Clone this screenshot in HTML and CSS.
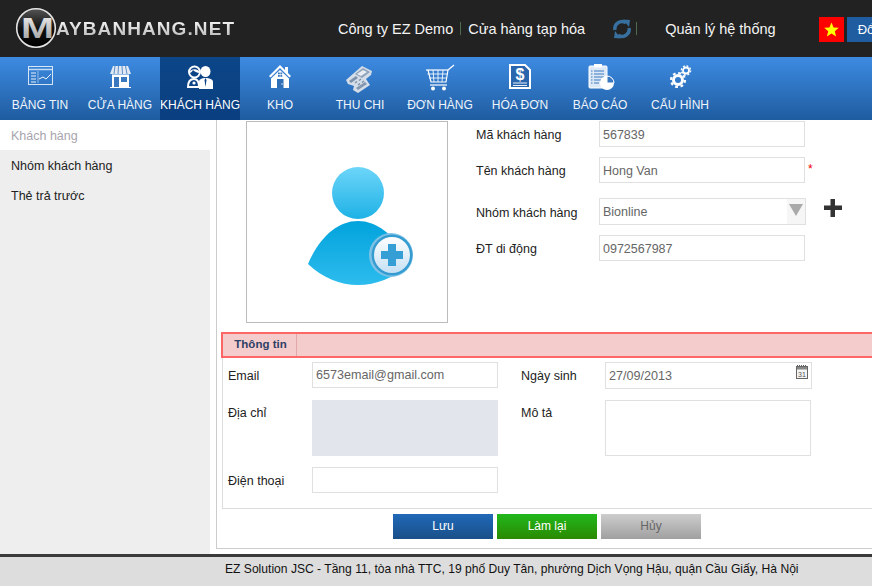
FILE: index.html
```html
<!DOCTYPE html>
<html lang="vi">
    <head>
        <meta charset="UTF-8">
        <meta name="viewport" content="width=device-width, initial-scale=1.0">
        <title>Máy bán hàng</title>
        <link rel="stylesheet" href="styles.css">
    </head>
    <body>
        <header class="top">
            <a class="logo" href="#">
                <svg class="logo-mark" width="42" height="42" viewBox="0 0 42 42">
                    <defs>
                        <linearGradient id="logoBall" x1="0" y1="0" x2="0" y2="1">
                            <stop offset="0" stop-color="#555"/>
                            <stop offset="0.5" stop-color="#111"/>
                            <stop offset="1" stop-color="#000"/>
                        </linearGradient>
                        <linearGradient id="logoM" x1="0" y1="0" x2="0" y2="1">
                            <stop offset="0" stop-color="#f4f4f4"/>
                            <stop offset="1" stop-color="#999"/>
                        </linearGradient>
                    </defs>
                    <circle cx="21" cy="21" r="19.3" fill="url(#logoBall)" stroke="#e4e4e4" stroke-width="1.6"/>
                    <text x="6" y="31" class="logo-m" fill="url(#logoM)" textLength="33" lengthAdjust="spacingAndGlyphs">M</text>
                </svg>
                <span class="logo-text">AYBANHANG.NET</span>
            </a>
            <span class="top-link company">Công ty EZ Demo</span>
            <span class="top-sep"></span>
            <span class="top-link">Cửa hàng tạp hóa</span>
            <svg class="sync" width="20" height="20" viewBox="0 0 20 20" fill="none" stroke="#37709f" stroke-width="3.4">
                <path d="M3 11 A7 7 0 0 1 14 4"/>
                <path d="M17 9 A7 7 0 0 1 6 16"/>
                <path d="M11 0.5 L18 1 L17 8 Z" fill="#37709f" stroke="none"/>
                <path d="M9 19.5 L2 19 L3 12 Z" fill="#37709f" stroke="none"/>
            </svg>
            <span class="top-sep sep-sync"></span>
            <span class="top-link system">Quản lý hệ thống</span>
            <svg class="flag" width="25" height="25" viewBox="0 0 25 25">
                <rect width="25" height="25" fill="#f00"/>
                <path d="M12.5 5.5 L14.6 10.4 L19.8 10.8 L15.8 14.2 L17.1 19.4 L12.5 16.6 L7.9 19.4 L9.2 14.2 L5.2 10.8 L10.4 10.4 Z" fill="#ff0"/>
            </svg>
            <a class="change-btn" href="#">Đổi mật khẩu</a>
        </header>

        <nav class="menu">
            <a class="menu-item" href="#">
                <svg viewBox="0 0 32 32" fill="none" stroke="#fff">
                    <rect x="4.5" y="3.5" width="24" height="18" stroke-opacity="0.8"/>
                    <path d="M5 6.5 H28" stroke-width="1.5" stroke-opacity="0.7"/>
                    <path d="M7 10 H12 M7 13 H12 M7 16 H12 M7 19 H12" stroke-opacity="0.9"/>
                    <path d="M14 8 V20" stroke-opacity="0.5"/>
                    <path d="M15 16 L19 14 L22 16 L27 11" stroke-opacity="0.9"/>
                </svg>
                <span>BẢNG TIN</span>
            </a>
            <a class="menu-item" href="#">
                <svg viewBox="0 0 32 32" fill="#fff">
                    <path d="M9 3 H24 L27 11 H6 Z" fill="#dfe8f3"/>
                    <path d="M11 3 L10 11 M14.5 3 L14 11 M18 3 L18.5 11 M21.5 3 L23 11" stroke="#5d8ec6"/>
                    <path d="M8 11.5 H25 V24 H8 Z"/>
                    <rect x="10" y="14" width="5" height="10" fill="#3a79bf"/>
                    <rect x="17" y="14" width="6" height="5" fill="#3a79bf"/>
                    <rect x="6" y="24" width="21" height="1"/>
                </svg>
                <span>CỬA HÀNG</span>
            </a>
            <a class="menu-item active" href="#">
                <svg viewBox="0 0 32 32" fill="#fff">
                    <circle cx="10.5" cy="9" r="5.5" fill="none" stroke="#fff" stroke-width="2"/>
                    <path d="M5 10 C6 5 15 5 16 10 C13 10 10 8 9 7 C8 9 7 10 5 10 Z"/>
                    <path d="M4 24 C4 18 7 16 10 16 C13 16 15 18 15 24 Z" fill="none" stroke="#fff" stroke-width="2"/>
                    <circle cx="10" cy="20" r="1.6"/>
                    <ellipse cx="21.5" cy="8.5" rx="5" ry="5.5"/>
                    <path d="M15 26 V19 C15 16 18 15 21.5 15 C25 15 29 16 29 19 V26 Z"/>
                    <path d="M21.5 15 L20.5 17 L21.5 24 L22.5 17 Z" fill="#0a4286"/>
                </svg>
                <span>KHÁCH HÀNG</span>
            </a>
            <a class="menu-item" href="#">
                <svg viewBox="0 0 32 32" fill="#fff">
                    <path d="M16 2 L27 13 L25.5 14.5 L16 5 L6.5 14.5 L5 13 Z"/>
                    <path d="M16 7 L25 15.5 V25 H7 V15.5 Z"/>
                    <rect x="21" y="4" width="3" height="6"/>
                    <rect x="14" y="9.5" width="1.8" height="1.8" fill="#3a79bf"/>
                    <rect x="16.4" y="9.5" width="1.8" height="1.8" fill="#3a79bf"/>
                    <rect x="14" y="12" width="1.8" height="1.8" fill="#3a79bf"/>
                    <rect x="16.4" y="12" width="1.8" height="1.8" fill="#3a79bf"/>
                    <rect x="13" y="16" width="6.5" height="9" fill="#2f6fb7"/>
                    <circle cx="18" cy="21" r="0.7"/>
                </svg>
                <span>KHO</span>
            </a>
            <a class="menu-item" href="#">
                <svg viewBox="0 0 32 32">
                    <path d="M2 17 L18 3 L28 8 L27 12 L22 16 L26 22 L14 30 L9 27 L10 23 L4 21 Z" fill="#d4dde8"/>
                    <path d="M11 11 L19 5 L26 9 L18 15 Z" fill="#8fa3ba"/>
                    <path d="M13 11 L19 7 L23 9 L17 13 Z" fill="#e9eef4"/>
                    <path d="M5 18 L12 13 L14 15 L7 20 Z" fill="#7e93ab"/>
                    <path d="M12 25 L21 19 L23 21 L14 27 Z" fill="#8397ae"/>
                    <path d="M11 20 L13 18.5 M14 22 L16 20.5 M15 17.5 L17 16 M18 19.5 L20 18" stroke="#7d91a8" stroke-width="1.5"/>
                </svg>
                <span>THU CHI</span>
            </a>
            <a class="menu-item" href="#">
                <svg viewBox="0 0 32 32" fill="none" stroke="#fff">
                    <path d="M2 7 H24" stroke-width="1.2"/>
                    <path d="M24 7 L30 2 M24 7 L22 19 H7 L4 7" stroke-width="1.2"/>
                    <path d="M3.5 11 H23.5 M5 15 H22.5 M9 7 L10 19 M14 7 V19 M19 7 L18 19" stroke-opacity="0.85"/>
                    <path d="M6 22 H23" stroke-width="1.2"/>
                    <circle cx="9" cy="25.5" r="2" fill="#fff" stroke="none"/>
                    <circle cx="20" cy="25.5" r="2" fill="#fff" stroke="none"/>
                </svg>
                <span>ĐƠN HÀNG</span>
            </a>
            <a class="menu-item" href="#">
                <svg viewBox="0 0 32 32">
                    <path d="M6 2 H21 L26 7 V25 H6 Z" fill="#2a66ad" stroke="#fff" stroke-width="2"/>
                    <text x="16" y="17" class="icon-dollar" fill="#fff" text-anchor="middle">$</text>
                    <path d="M9 20 H23 M9 22.5 H23" stroke="#fff" stroke-width="0.9"/>
                </svg>
                <span>HÓA ĐƠN</span>
            </a>
            <a class="menu-item" href="#">
                <svg viewBox="0 0 32 32">
                    <rect x="5" y="3" width="18" height="22" rx="1" fill="#dce8f6" stroke="#fff"/>
                    <rect x="10" y="1" width="8" height="3.5" fill="#fff"/>
                    <path d="M10 8 H20 M10 11 H20 M10 14 H20 M10 17 H17 M10 20 H15" stroke="#3a79bf"/>
                    <path d="M7 8 H8.5 M7 11 H8.5 M7 14 H8.5 M7 17 H8.5 M7 20 H8.5" stroke="#3a79bf"/>
                    <circle cx="23" cy="20" r="7" fill="#fff"/>
                    <path d="M23 20 V13 A7 7 0 0 1 30 20 Z" fill="#3a79bf" stroke="#fff"/>
                </svg>
                <span>BÁO CÁO</span>
            </a>
            <a class="menu-item" href="#">
                <svg viewBox="0 0 32 32" fill="none" stroke="#fff">
                    <circle cx="14" cy="17" r="4.5" stroke-width="3"/>
                    <circle cx="14" cy="17" r="7" stroke-width="2.2" stroke-dasharray="2.8 2.7"/>
                    <circle cx="22" cy="7.5" r="3" stroke-width="1.8"/>
                    <circle cx="22" cy="7.5" r="4.6" stroke-width="1.4" stroke-dasharray="1.9 1.7"/>
                </svg>
                <span>CẤU HÌNH</span>
            </a>
        </nav>

        <div class="page">
            <aside class="side">
                <a class="side-item current" href="#">Khách hàng</a>
                <a class="side-item" href="#">Nhóm khách hàng</a>
                <a class="side-item" href="#">Thẻ trả trước</a>
            </aside>

            <main class="content">
                <section class="customer">
                    <div class="photo">
                        <svg width="200" height="200" viewBox="0 0 200 200">
                            <defs>
                                <linearGradient id="head" x1="0" y1="0" x2="0" y2="1">
                                    <stop offset="0" stop-color="#6dd5f9"/>
                                    <stop offset="1" stop-color="#1fb2e6"/>
                                </linearGradient>
                                <linearGradient id="torso" x1="0" y1="0" x2="0" y2="1">
                                    <stop offset="0" stop-color="#02a3dc"/>
                                    <stop offset="1" stop-color="#2dbcee"/>
                                </linearGradient>
                                <linearGradient id="badge" x1="0" y1="0" x2="0" y2="1">
                                    <stop offset="0" stop-color="#fdfeff"/>
                                    <stop offset="1" stop-color="#c6e1f4"/>
                                </linearGradient>
                            </defs>
                            <circle cx="111" cy="71" r="26" fill="url(#head)"/>
                            <path d="M61 142 C72 116 90 99 111 99 C132 99 150 116 163 142 C147 156 129 163 111 163 C93 163 76 156 61 142 Z" fill="url(#torso)"/>
                            <circle cx="144" cy="133" r="22" fill="#7fc2e6"/>
                            <circle cx="145" cy="133" r="20.5" fill="#349cd0"/>
                            <circle cx="145" cy="133" r="18" fill="url(#badge)"/>
                            <path d="M141 122 H149 V129 H156 V137 H149 V144 H141 V137 H134 V129 H141 Z" fill="#359fd5"/>
                        </svg>
                    </div>
                    <div class="fields">
                        <div class="field">
                            <label class="lbl">Mã khách hàng</label>
                            <input class="txt" type="text" value="567839">
                        </div>
                        <div class="field">
                            <label class="lbl">Tên khách hàng</label>
                            <input class="txt" type="text" value="Hong Van">
                            <span class="req">*</span>
                        </div>
                        <div class="field field-group">
                            <label class="lbl">Nhóm khách hàng</label>
                            <div class="select-wrap">
                                <select class="sel"><option>Bionline</option></select>
                                <span class="sel-arrow"></span>
                            </div>
                            <svg class="add" width="18" height="18" viewBox="0 0 18 18"><path d="M6.5 0 H11 V6.5 H18 V11 H11 V18 H6.5 V11 H0 V6.5 H6.5 Z" fill="#333"/></svg>
                        </div>
                        <div class="field">
                            <label class="lbl">ĐT di động</label>
                            <input class="txt" type="text" value="0972567987">
                        </div>
                    </div>
                </section>

                <div class="tabbar"><span class="tab">Thông tin</span></div>

                <section class="details">
                    <label class="lbl-b">Email</label>
                    <input class="txt-b" type="text" value="6573email@gmail.com">
                    <label class="lbl-b col2">Ngày sinh</label>
                    <div class="date-wrap">
                        <input class="txt-b date" type="text" value="27/09/2013">
                        <svg class="cal" width="12" height="16" viewBox="0 0 12 16">
                            <path d="M1.5 1 V3 M3.5 1 V3 M5.5 1 V3 M7.5 1 V3 M9.5 1 V3" stroke="#666"/>
                            <rect x="0.5" y="2.5" width="11" height="12" fill="#f4f4f4" stroke="#666"/>
                            <rect x="1" y="3" width="10" height="2.5" fill="#888"/>
                            <text x="6" y="12.5" class="cal-num" fill="#555" text-anchor="middle">31</text>
                        </svg>
                    </div>
                    <label class="lbl-b lbl-top">Địa chỉ</label>
                    <textarea class="area filled"></textarea>
                    <label class="lbl-b lbl-top col2">Mô tả</label>
                    <textarea class="area note"></textarea>
                    <label class="lbl-b">Điện thoại</label>
                    <input class="txt-b" type="text">
                </section>

                <div class="actions">
                    <a class="btn btn-save" href="#">Lưu</a>
                    <a class="btn btn-reset" href="#">Làm lại</a>
                    <a class="btn btn-cancel" href="#">Hủy</a>
                </div>
            </main>
        </div>

        <footer class="foot">EZ Solution JSC - Tầng 11, tòa nhà TTC, 19 phố Duy Tân, phường Dịch Vọng Hậu, quận Cầu Giấy, Hà Nội</footer>
    </body>
</html>
```

FILE: styles.css
```css
* {
    padding: 0;
    margin: 0;
    box-sizing: border-box;
    font-family: "Liberation Sans", Arial, Helvetica, sans-serif;
}

html, body {
    width: 872px;
    height: 586px;
    overflow: hidden;
    background-color: #fff;
}

a {
    text-decoration: none;
}

/* top bar */
.top {
    display: flex;
    align-items: center;
    height: 57px;
    background-color: #222;
    color: #fff;
    white-space: nowrap;
    overflow: hidden;
}

.top > * {
    flex: none;
}

.logo {
    display: flex;
    align-items: center;
    width: 338px;
    padding-left: 15px;
}

.logo-mark {
    flex: none;
    margin-top: -2px;
}

.logo-m {
    font-size: 29px;
    font-weight: bold;
}

.logo-text {
    margin-left: -1px;
    font-size: 19px;
    font-weight: bold;
    letter-spacing: 1.08px;
    background: linear-gradient(#fff, #b0b0b0);
    -webkit-background-clip: text;
    background-clip: text;
    color: transparent;
}

.top-link {
    font-size: 14.5px;
    color: #f4f4f4;
}

.top-sep {
    width: 1px;
    height: 13px;
    margin: 0 7px;
    background-color: #4f6a4f;
}

.sync {
    margin-left: 27px;
}

.sep-sync {
    margin-left: 4px;
    margin-right: 0;
}

.system {
    margin-left: 28px;
}

.flag {
    margin-left: 43px;
    margin-top: 2px;
}

.change-btn {
    height: 25px;
    margin-top: 2px;
    margin-left: 3px;
    padding: 0 10px 0 11px;
    line-height: 25px;
    font-size: 13px;
    color: #fff;
    background-color: #1f5da0;
}

/* blue menu */
.menu {
    display: flex;
    height: 63px;
    background: linear-gradient(#3d8be2, #1f5ca0);
}

.menu-item {
    display: flex;
    flex-direction: column;
    align-items: center;
    width: 80px;
    color: #eef4fb;
    font-size: 12px;
    white-space: nowrap;
}

.menu-item svg {
    flex: none;
    width: 32px;
    height: 32px;
    margin-top: 6px;
}

.menu-item span {
    margin-top: 2px;
    line-height: 16px;
}

.menu-item.active {
    background: linear-gradient(#0c4688, #0a3f80);
    color: #fff;
}

.icon-dollar {
    font-size: 16px;
    font-weight: bold;
}

/* body of page */
.page {
    display: flex;
    height: 434px;
}

.side {
    flex: none;
    width: 210px;
    background-color: #eee;
}

.side-item {
    display: block;
    height: 30px;
    padding-left: 11px;
    line-height: 32px;
    font-size: 12.5px;
    color: #222;
}

.side-item.current {
    background-color: #fff;
    color: #a8a4ad;
}

.content {
    flex: none;
    width: 656px;
    height: 429px;
    margin-left: 6px;
    border-left: 1px solid #ccc;
    border-bottom: 1px solid #ccc;
}

.customer {
    display: flex;
    padding: 1px 0 0 29px;
}

.photo {
    flex: none;
    width: 202px;
    height: 202px;
    border: 1px solid #bbb;
}

.photo svg {
    display: block;
}

.fields {
    margin-left: 28px;
}

.field {
    display: flex;
    align-items: center;
    height: 26px;
    margin-bottom: 10px;
}

.field-group {
    height: 27px;
    margin-top: 15px;
}

.lbl {
    flex: none;
    width: 123px;
    padding-top: 2px;
    font-size: 12.5px;
    color: #222;
}

.txt, .sel {
    width: 206px;
    height: 26px;
    padding: 1px 0 0 3px;
    border: 1px solid #e0e0e0;
    background-color: #fff;
    font-size: 12.5px;
    color: #666;
    outline: 0;
}

.req {
    align-self: flex-start;
    margin: 5px 0 0 3px;
    font-size: 12px;
    color: #e00;
}

.select-wrap {
    position: relative;
    width: 207px;
    height: 27px;
}

.sel {
    display: block;
    width: 207px;
    height: 27px;
    appearance: none;
    -webkit-appearance: none;
    background: linear-gradient(to right, #fff 187px, #f6f6f6 187px);
}

.sel-arrow {
    position: absolute;
    top: 6px;
    right: 3px;
    border-left: 7px solid transparent;
    border-right: 7px solid transparent;
    border-top: 12px solid #aaa;
}

.add {
    flex: none;
    margin: -8px 0 0 18px;
}

.tabbar {
    height: 26px;
    margin: 9px 0 0 4px;
    border: 2px solid #f66;
    border-right: 0;
    background-color: #f5cccc;
}

.tab {
    display: block;
    width: 74px;
    height: 22px;
    padding-left: 2px;
    line-height: 21px;
    text-align: center;
    font-size: 11.5px;
    font-weight: bold;
    color: #2e3f66;
    border-right: 1px solid #e0a8a8;
}

.details {
    display: grid;
    grid-template-columns: 84px 186px 107px 207px;
    grid-template-rows: 38px 67px 26px;
    height: 151px;
    margin-left: 5px;
    padding: 4px 0 0 5px;
    border-left: 1px solid #ddd;
    border-bottom: 1px solid #ddd;
}

.lbl-b {
    padding-top: 7px;
    font-size: 12.5px;
    color: #222;
}

.lbl-top {
    padding-top: 6px;
}

.col2 {
    margin-left: 23px;
}

.txt-b, .area {
    display: block;
    width: 186px;
    border: 1px solid #e0e0e0;
    background-color: #fff;
    padding-left: 3px;
    font-size: 12.6px;
    color: #666;
    outline: 0;
    resize: none;
}

.txt-b {
    height: 26px;
}

.area {
    height: 56px;
}

.area.filled {
    border-color: #e2e6ec;
    background-color: #e2e6ec;
}

.area.note {
    width: 206px;
}

.date-wrap {
    position: relative;
    width: 207px;
    height: 27px;
}

.date {
    width: 207px;
    height: 27px;
}

.cal {
    position: absolute;
    top: 2px;
    right: 4px;
}

.cal-num {
    font-size: 7px;
}

.actions {
    display: flex;
    gap: 4px;
    margin: 5px 0 0 176px;
}

.btn {
    width: 100px;
    height: 25px;
    line-height: 25px;
    text-align: center;
    font-size: 12px;
    color: #fff;
}

.btn-save {
    background: linear-gradient(#2069b8, #1a4f88);
}

.btn-reset {
    background: linear-gradient(#21b81c, #2b8900);
}

.btn-cancel {
    background: linear-gradient(#cdcdcd, #a0a0a0);
    color: #666;
}

/* footer */
.foot {
    height: 32px;
    padding-left: 225px;
    border-top: 3px solid #3a3a3a;
    background-color: #ddd;
    line-height: 25px;
    font-size: 12.1px;
    color: #111;
    white-space: nowrap;
}
```
